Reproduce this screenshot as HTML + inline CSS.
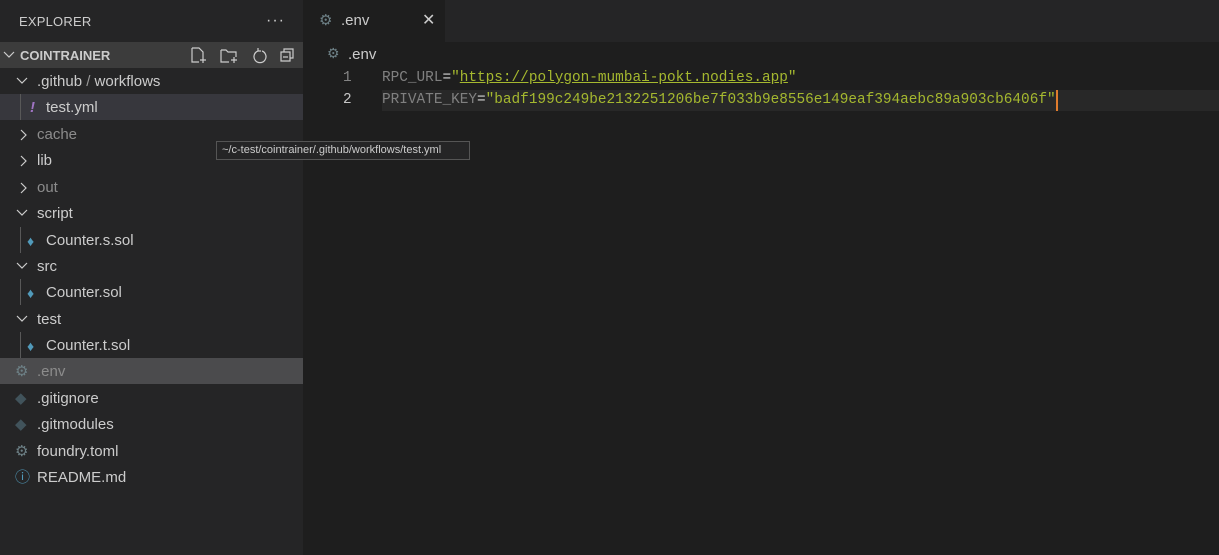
<!DOCTYPE html>
<html><head><style>
*{margin:0;padding:0;box-sizing:border-box}
body{width:1219px;height:555px;background:#1e1e1e;font-family:"Liberation Sans",sans-serif;overflow:hidden;position:relative;color:#ccc}
#side{position:absolute;left:0;top:0;width:303px;height:555px;background:#252526}
.hdr{position:absolute;left:19px;top:14px;font-size:13px;color:#ccc;letter-spacing:.2px}
.dots{position:absolute;left:266px;top:12px;font-size:16px;color:#ccc;letter-spacing:1px}
.sec{position:absolute;left:0;top:42px;width:303px;height:26px;background:#3c3c3c}
.sec span{position:absolute;left:20px;top:6px;font-size:13px;font-weight:bold;color:#ccc}
.row{position:absolute;left:0;width:303px;height:26px;font-size:15px;line-height:28px;color:#ccc}
.row .t{position:absolute;top:0}
.row svg{position:absolute;top:8px}
.sel{background:#37373d}
.act{background:#4b4b4d}
.guide{position:absolute;left:20px;width:1px;background:#585858}
#tabs{position:absolute;left:303px;top:0;width:916px;height:42px;background:#252526}
#tab{position:absolute;left:303px;top:0;width:142px;height:42px;background:#1e1e1e}
.code{position:absolute;font-family:"Liberation Mono",monospace;font-size:14.4px;white-space:pre;line-height:22px}
.tip{position:absolute;left:216px;top:141px;width:254px;height:19px;background:#252526;border:1px solid #555;font-size:11px;color:#ccc;line-height:17px;padding-left:5px}
</style></head><body>
<div id="side">
<div class="hdr">EXPLORER</div><div class="dots">···</div>
<div class="sec"><svg style="position:absolute;left:3px;top:8px" width="12" height="10"><path d="M1 2l5 5 5-5" stroke="#ccc" fill="none" stroke-width="1.2"/></svg><span>COINTRAINER</span>
<svg style="position:absolute;left:190px;top:4px" width="110" height="20" fill="none" stroke="#ccc" stroke-width="1.2">
<path d="M2 2h7l4 4v7M2 2v14h7M13 11v6M10 14h6"/>
<path d="M31 4h5l2 2h8v5M31 4v12h8M44 11v6M41 14h6"/>
<path d="M68 5a6 6 0 1 0 4 0M68 5l0-3M68 5l3 0"/>
<path d="M91 6h9v9h-9zM94 6V3h9v9h-3M93 11h5"/>
</svg></div>
<div class="row" style="top:68px"><svg style="left:16px" width="12" height="10"><path d="M1 2l5 5 5-5" stroke="#ccc" fill="none" stroke-width="1.2"/></svg><span class="t" style="left:37px">.github <span style="color:#999">/</span> workflows</span></div>
<div class="row sel" style="top:94px"><span class="t" style="left:30px;color:#a074c4;font-style:italic;font-weight:bold">!</span><span class="t" style="left:46px">test.yml</span></div>
<div class="guide" style="top:94px;height:26px"></div>
<div class="row" style="top:121px;color:#8c8c8c"><svg style="left:18px" width="10" height="12"><path d="M3 1l5 5-5 5" stroke="#ccc" fill="none" stroke-width="1.2"/></svg><span class="t" style="left:37px">cache</span></div>
<div class="row" style="top:147px"><svg style="left:18px" width="10" height="12"><path d="M3 1l5 5-5 5" stroke="#ccc" fill="none" stroke-width="1.2"/></svg><span class="t" style="left:37px">lib</span></div>
<div class="row" style="top:174px;color:#8c8c8c"><svg style="left:18px" width="10" height="12"><path d="M3 1l5 5-5 5" stroke="#ccc" fill="none" stroke-width="1.2"/></svg><span class="t" style="left:37px">out</span></div>
<div class="row" style="top:200px"><svg style="left:16px" width="12" height="10"><path d="M1 2l5 5 5-5" stroke="#ccc" fill="none" stroke-width="1.2"/></svg><span class="t" style="left:37px">script</span></div>
<div class="row" style="top:227px"><span class="t" style="left:27px;color:#519aba;font-size:14px">♦</span><span class="t" style="left:46px">Counter.s.sol</span></div>
<div class="guide" style="top:227px;height:26px"></div>
<div class="row" style="top:253px"><svg style="left:16px" width="12" height="10"><path d="M1 2l5 5 5-5" stroke="#ccc" fill="none" stroke-width="1.2"/></svg><span class="t" style="left:37px">src</span></div>
<div class="row" style="top:279px"><span class="t" style="left:27px;color:#519aba;font-size:14px">♦</span><span class="t" style="left:46px">Counter.sol</span></div>
<div class="guide" style="top:279px;height:26px"></div>
<div class="row" style="top:306px"><svg style="left:16px" width="12" height="10"><path d="M1 2l5 5 5-5" stroke="#ccc" fill="none" stroke-width="1.2"/></svg><span class="t" style="left:37px">test</span></div>
<div class="row" style="top:332px"><span class="t" style="left:27px;color:#519aba;font-size:14px">♦</span><span class="t" style="left:46px">Counter.t.sol</span></div>
<div class="guide" style="top:332px;height:26px"></div>
<div class="row act" style="top:358px;color:#8c8c8c"><span class="t" style="left:15px;color:#6d8086">⚙</span><span class="t" style="left:37px">.env</span></div>
<div class="row" style="top:385px"><span class="t" style="left:15px;color:#41535b">◆</span><span class="t" style="left:37px">.gitignore</span></div>
<div class="row" style="top:411px"><span class="t" style="left:15px;color:#41535b">◆</span><span class="t" style="left:37px">.gitmodules</span></div>
<div class="row" style="top:438px"><span class="t" style="left:15px;color:#6d8086">⚙</span><span class="t" style="left:37px">foundry.toml</span></div>
<div class="row" style="top:464px"><span class="t" style="left:15px;color:#519aba">ⓘ</span><span class="t" style="left:37px">README.md</span></div>
</div>
<div id="tabs"></div>
<div id="tab"><span style="position:absolute;left:16px;top:11px;color:#6d8086;font-size:15px">⚙</span><span style="position:absolute;left:38px;top:12px;font-size:15px;color:#ccc">.env</span><span style="position:absolute;left:119px;top:10px;font-size:16px;color:#ccc">✕</span></div>
<span style="position:absolute;left:327px;top:45px;color:#6d8086;font-size:14px">⚙</span><span style="position:absolute;left:348px;top:46px;font-size:15px;color:#ccc">.env</span>
<div style="position:absolute;left:382px;top:90px;width:837px;height:21px;background:#282828"></div>
<div style="position:absolute;left:1056px;top:90px;width:2px;height:21px;background:#e07c2d"></div>
<div class="code" style="left:343px;top:67px;color:#858585">1</div>
<div class="code" style="left:343px;top:89px;color:#c6c6c6">2</div>
<div class="code" style="left:382px;top:67px;color:#808080">RPC_URL<span style="color:#d4d4d4">=</span><span style="color:#a5b82f">"<u>https://polygon-mumbai-pokt.nodies.app</u>"</span></div>
<div class="code" style="left:382px;top:89px;color:#808080">PRIVATE_KEY<span style="color:#d4d4d4">=</span><span style="color:#a5b82f">"badf199c249be2132251206be7f033b9e8556e149eaf394aebc89a903cb6406f"</span></div>
<div class="tip">~/c-test/cointrainer/.github/workflows/test.yml</div>
</body></html>
